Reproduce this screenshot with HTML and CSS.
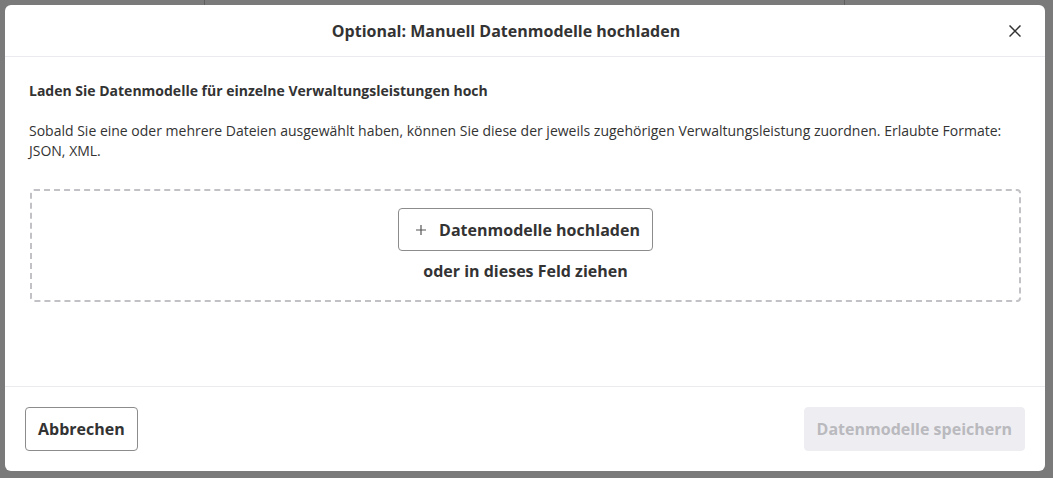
FILE: index.html
```html
<!DOCTYPE html>
<html lang="de">
<head>
<meta charset="utf-8">
<title>Datenmodelle hochladen</title>
<link rel="stylesheet" href="styles.css">
</head>
<body>
<div class="backdrop">
  <div class="bg-cols">
    <div class="bg-col bg-col-a"></div>
    <div class="bg-col bg-col-b"></div>
    <div class="bg-col bg-col-c"></div>
  </div>
  <div class="modal">
    <div class="modal-header">
      <h1 class="modal-title">Optional: Manuell Datenmodelle hochladen</h1>
      <button class="close-btn" aria-label="Schließen">
        <svg width="12" height="12" viewBox="0 0 12 12"><path d="M0.5 0.5L11.5 11.5M11.5 0.5L0.5 11.5" stroke="#333" stroke-width="1.5" fill="none"/></svg>
      </button>
    </div>
    <div class="modal-body">
      <h2 class="section-title">Laden Sie Datenmodelle für einzelne Verwaltungsleistungen hoch</h2>
      <p class="section-text">Sobald Sie eine oder mehrere Dateien ausgewählt haben, können Sie diese der jeweils zugehörigen Verwaltungsleistung zuordnen. Erlaubte Formate: JSON, XML.</p>
      <div class="dropzone">
        <button class="upload-btn">
          <svg width="10" height="10" viewBox="0 0 10 10"><path d="M5 0V10M0 5H10" stroke="#555" stroke-width="1.2" fill="none"/></svg>
          <span>Datenmodelle hochladen</span>
        </button>
        <div class="drop-hint">oder in dieses Feld ziehen</div>
      </div>
    </div>
    <div class="modal-footer">
      <button class="btn btn-secondary">Abbrechen</button>
      <button class="btn btn-disabled" disabled>Datenmodelle speichern</button>
    </div>
  </div>
</div>
</body>
</html>
```
FILE: styles.css
```css
* { box-sizing: border-box; }
html, body { margin: 0; padding: 0; }
body {
  font-family: "Open Sans", "Noto Sans", sans-serif;
  color: #333;
  background: #7a7a7a;
}
.backdrop {
  position: relative;
  width: 1053px;
  height: 478px;
  background: #7a7a7a;
  padding: 5px 8px 7px 5px;
}
.bg-cols {
  position: absolute;
  top: 0;
  left: 0;
  right: 0;
  height: 6px;
  display: flex;
}
.bg-col-a { width: 205px; border-right: 1px solid #5f5f5f; }
.bg-col-b { width: 640px; border-right: 1px solid #5f5f5f; }
.bg-col-c { flex: 1; }
.modal {
  position: relative;
  width: 1040px;
  height: 466px;
  background: #fff;
  border-radius: 6px;
  display: flex;
  flex-direction: column;
}
.modal-header {
  height: 52px;
  display: flex;
  align-items: center;
  padding: 0 16px 0 24px;
  border-bottom: 1px solid #ebebef;
}
.modal-title {
  flex: 1;
  margin: 0;
  text-align: center;
  font-size: 16px;
  font-weight: 700;
  line-height: 24px;
  color: #333;
  padding-left: 0;
  padding-right: 18px;
}
.close-btn {
  width: 28px;
  height: 28px;
  border: 0;
  background: none;
  padding: 0;
  display: flex;
  align-items: center;
  justify-content: center;
  cursor: pointer;
}
.modal-body {
  flex: 1;
  padding: 24px 24px 0 24px;
}
.section-title {
  margin: 0 0 20px 0;
  font-size: 14px;
  font-weight: 700;
  line-height: 20px;
}
.section-text {
  margin: 0 0 28px 0;
  font-size: 14px;
  line-height: 20px;
  font-weight: 400;
}
.dropzone {
  margin-left: 1px;
  border: 2px dashed #c1c1c6;
  border-radius: 4px;
  padding: 17px 0;
  display: flex;
  flex-direction: column;
  align-items: center;
  gap: 8px;
}
.upload-btn {
  height: 43px;
  display: flex;
  align-items: center;
  gap: 13px;
  padding: 0 12px 0 17px;
  background: #fff;
  border: 1px solid #8c8c8c;
  border-radius: 4px;
  font-family: inherit;
  font-size: 16px;
  font-weight: 700;
  color: #333;
}
.drop-hint {
  font-size: 16px;
  font-weight: 700;
  line-height: 24px;
}
.modal-footer {
  border-top: 1px solid #ebebef;
  padding: 20px;
  display: flex;
  justify-content: space-between;
}
.btn {
  height: 44px;
  padding: 0 12px;
  border-radius: 4px;
  font-family: inherit;
  font-size: 16px;
  font-weight: 700;
}
.btn-secondary {
  background: #fff;
  border: 1px solid #8c8c8c;
  color: #333;
}
.btn-disabled {
  background: #eeeef2;
  border: 1px solid #eeeef2;
  color: #b9b9be;
}
```
